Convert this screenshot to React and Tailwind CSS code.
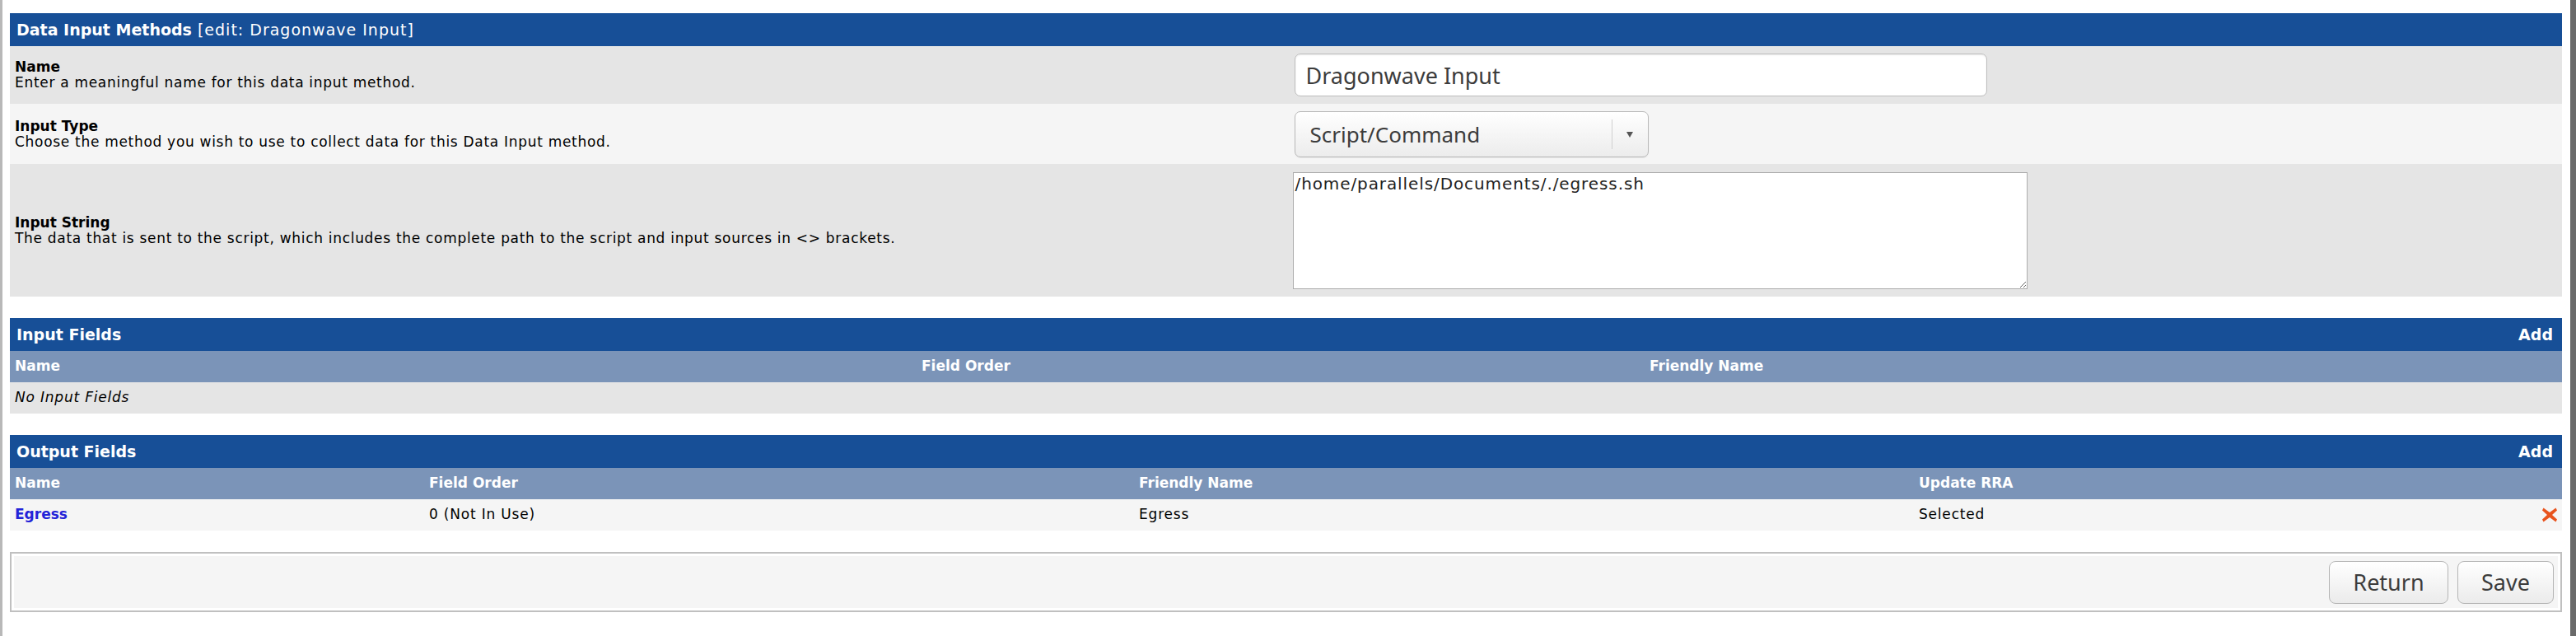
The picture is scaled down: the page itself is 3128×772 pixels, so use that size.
import React from "react";

const F = "font-['DejaVu_Sans',sans-serif]";
const U = "font-['Noto_Sans',sans-serif]";

function SectionHeader({ title, extra, add }) {
  return (
    <div className="flex h-[40px] items-center justify-between bg-[#174f97] pl-[8px] pr-[11px] text-[19px] text-white">
      <div className="whitespace-nowrap">
        <span className="font-bold">{title}</span>
        {extra ? <span className="tracking-[1px]"> {extra}</span> : null}
      </div>
      {add ? <span className="font-bold">Add</span> : null}
    </div>
  );
}

function FormRow({ bg, label, desc, children, py }) {
  return (
    <div className={`grid grid-cols-2 ${bg}`}>
      <div className="flex flex-col justify-center pl-[6px] text-[17px] leading-[19px] text-black">
        <span className="font-bold">{label}</span>
        <span className="tracking-[0.7px]">{desc}</span>
      </div>
      <div className={`${py} pl-[10px]`}>{children}</div>
    </div>
  );
}

function DeleteIcon() {
  return (
    <svg width="20" height="20" viewBox="0 0 20 20">
      <path
        d="M2.5 1.5 L10 7 L17.5 1.5 L19 4.5 L13 10 L19 15.5 L17.5 18.5 L10 13 L2.5 18.5 L1 15.5 L7 10 L1 4.5 Z"
        fill="#e8531d"
      />
    </svg>
  );
}

export default function App() {
  return (
    <div className={`flex min-h-[772px] w-full bg-white ${F}`}>
      <div className="w-[3px] bg-[#b8b8b8]" />
      <div className="flex-1 pb-[20px] pl-[9px] pr-[10px] pt-[16px]">
        {/* Data Input Methods */}
        <div>
          <SectionHeader title="Data Input Methods" extra="[edit: Dragonwave Input]" />
          <FormRow bg="bg-[#e5e5e5]" label="Name" desc="Enter a meaningful name for this data input method." py="py-[9px]">
            <input
              readOnly
              defaultValue="Dragonwave Input"
              className={`${U} block h-[52px] w-[841px] rounded-[7px] border border-[#bdbdbd] bg-white pl-[13px] text-[27px] text-[#3c3c3c] shadow-[inset_0_1px_2px_rgba(0,0,0,0.08)] outline-none`}
            />
          </FormRow>
          <FormRow bg="bg-[#f5f5f5]" label="Input Type" desc="Choose the method you wish to use to collect data for this Data Input method." py="pt-[9px] pb-[8px]">
            <div className="flex h-[56px] w-[430px] items-center rounded-[7px] border border-[#b8b8b8] bg-gradient-to-b from-white to-[#ececec] shadow-[0_1px_1px_rgba(0,0,0,0.06)]">
              <span className={`${U} flex-1 pl-[18px] text-[26px] text-[#3c3c3c]`}>Script/Command</span>
              <div className="h-[36px] w-px bg-[#d0d0d0]" />
              <div className="flex w-[43px] justify-center">
                <svg width="8" height="7" viewBox="0 0 8 7">
                  <path d="M0 0 H8 L4 7 Z" fill="#555" />
                </svg>
              </div>
            </div>
          </FormRow>
          <FormRow
            bg="bg-[#e5e5e5]"
            label="Input String"
            desc="The data that is sent to the script, which includes the complete path to the script and input sources in <> brackets."
            py="pt-[10px] pb-[9px]"
          >
            <textarea
              readOnly
              defaultValue="/home/parallels/Documents/./egress.sh"
              className="-ml-[2px] block h-[142px] w-[892px] border border-[#adadad] bg-white px-[2px] pt-[2px] text-[20px] leading-[22px] tracking-[0.9px] text-[#222] outline-none"
            />
          </FormRow>
        </div>

        {/* Input Fields */}
        <div className="mt-[26px]">
          <SectionHeader title="Input Fields" add />
          <div className="grid h-[38px] grid-cols-[1101px_884px_1fr] items-center bg-[#7b94b8] text-[17px] font-bold text-white">
            <span className="pl-[6px]">Name</span>
            <span className="pl-[6px]">Field Order</span>
            <span className="pl-[6px]">Friendly Name</span>
          </div>
          <div className="flex h-[38px] items-center bg-[#e5e5e5] pl-[6px] text-[17px] italic tracking-[0.8px] text-black">
            No Input Fields
          </div>
        </div>

        {/* Output Fields */}
        <div className="mt-[26px]">
          <SectionHeader title="Output Fields" add />
          <div className="grid h-[38px] grid-cols-[503px_862px_947px_1fr] items-center bg-[#7b94b8] text-[17px] font-bold text-white">
            <span className="pl-[6px]">Name</span>
            <span className="pl-[6px]">Field Order</span>
            <span className="pl-[6px]">Friendly Name</span>
            <span className="pl-[6px]">Update RRA</span>
          </div>
          <div className="grid h-[38px] grid-cols-[503px_862px_947px_1fr] items-center bg-[#f5f5f5] text-[17px] tracking-[0.8px] text-black">
            <span className="pl-[6px] font-bold tracking-normal text-[#2323d8]">Egress</span>
            <span className="pl-[6px]">0 (Not In Use)</span>
            <span className="pl-[6px]">Egress</span>
            <div className="flex items-center justify-between pl-[6px] pr-[5px]">
              <span>Selected</span>
              <DeleteIcon />
            </div>
          </div>
        </div>

        {/* Buttons */}
        <div className="mt-[26px] border-2 border-[#c0c0c0] bg-white p-[3px]">
          <div className={`flex justify-end gap-[11px] bg-[#f5f5f5] pb-[5px] pr-[5px] pt-[6px] ${U}`}>
            <button className="h-[52px] w-[145px] rounded-[8px] border border-[#b5b5b5] bg-gradient-to-b from-white to-[#ebebeb] text-[27px] text-[#3c3c3c]">
              Return
            </button>
            <button className="h-[52px] w-[117px] rounded-[8px] border border-[#b5b5b5] bg-gradient-to-b from-white to-[#ebebeb] text-[27px] text-[#3c3c3c]">
              Save
            </button>
          </div>
        </div>
      </div>
      <div className="w-[7px] bg-[#6a6a6a]" />
    </div>
  );
}
